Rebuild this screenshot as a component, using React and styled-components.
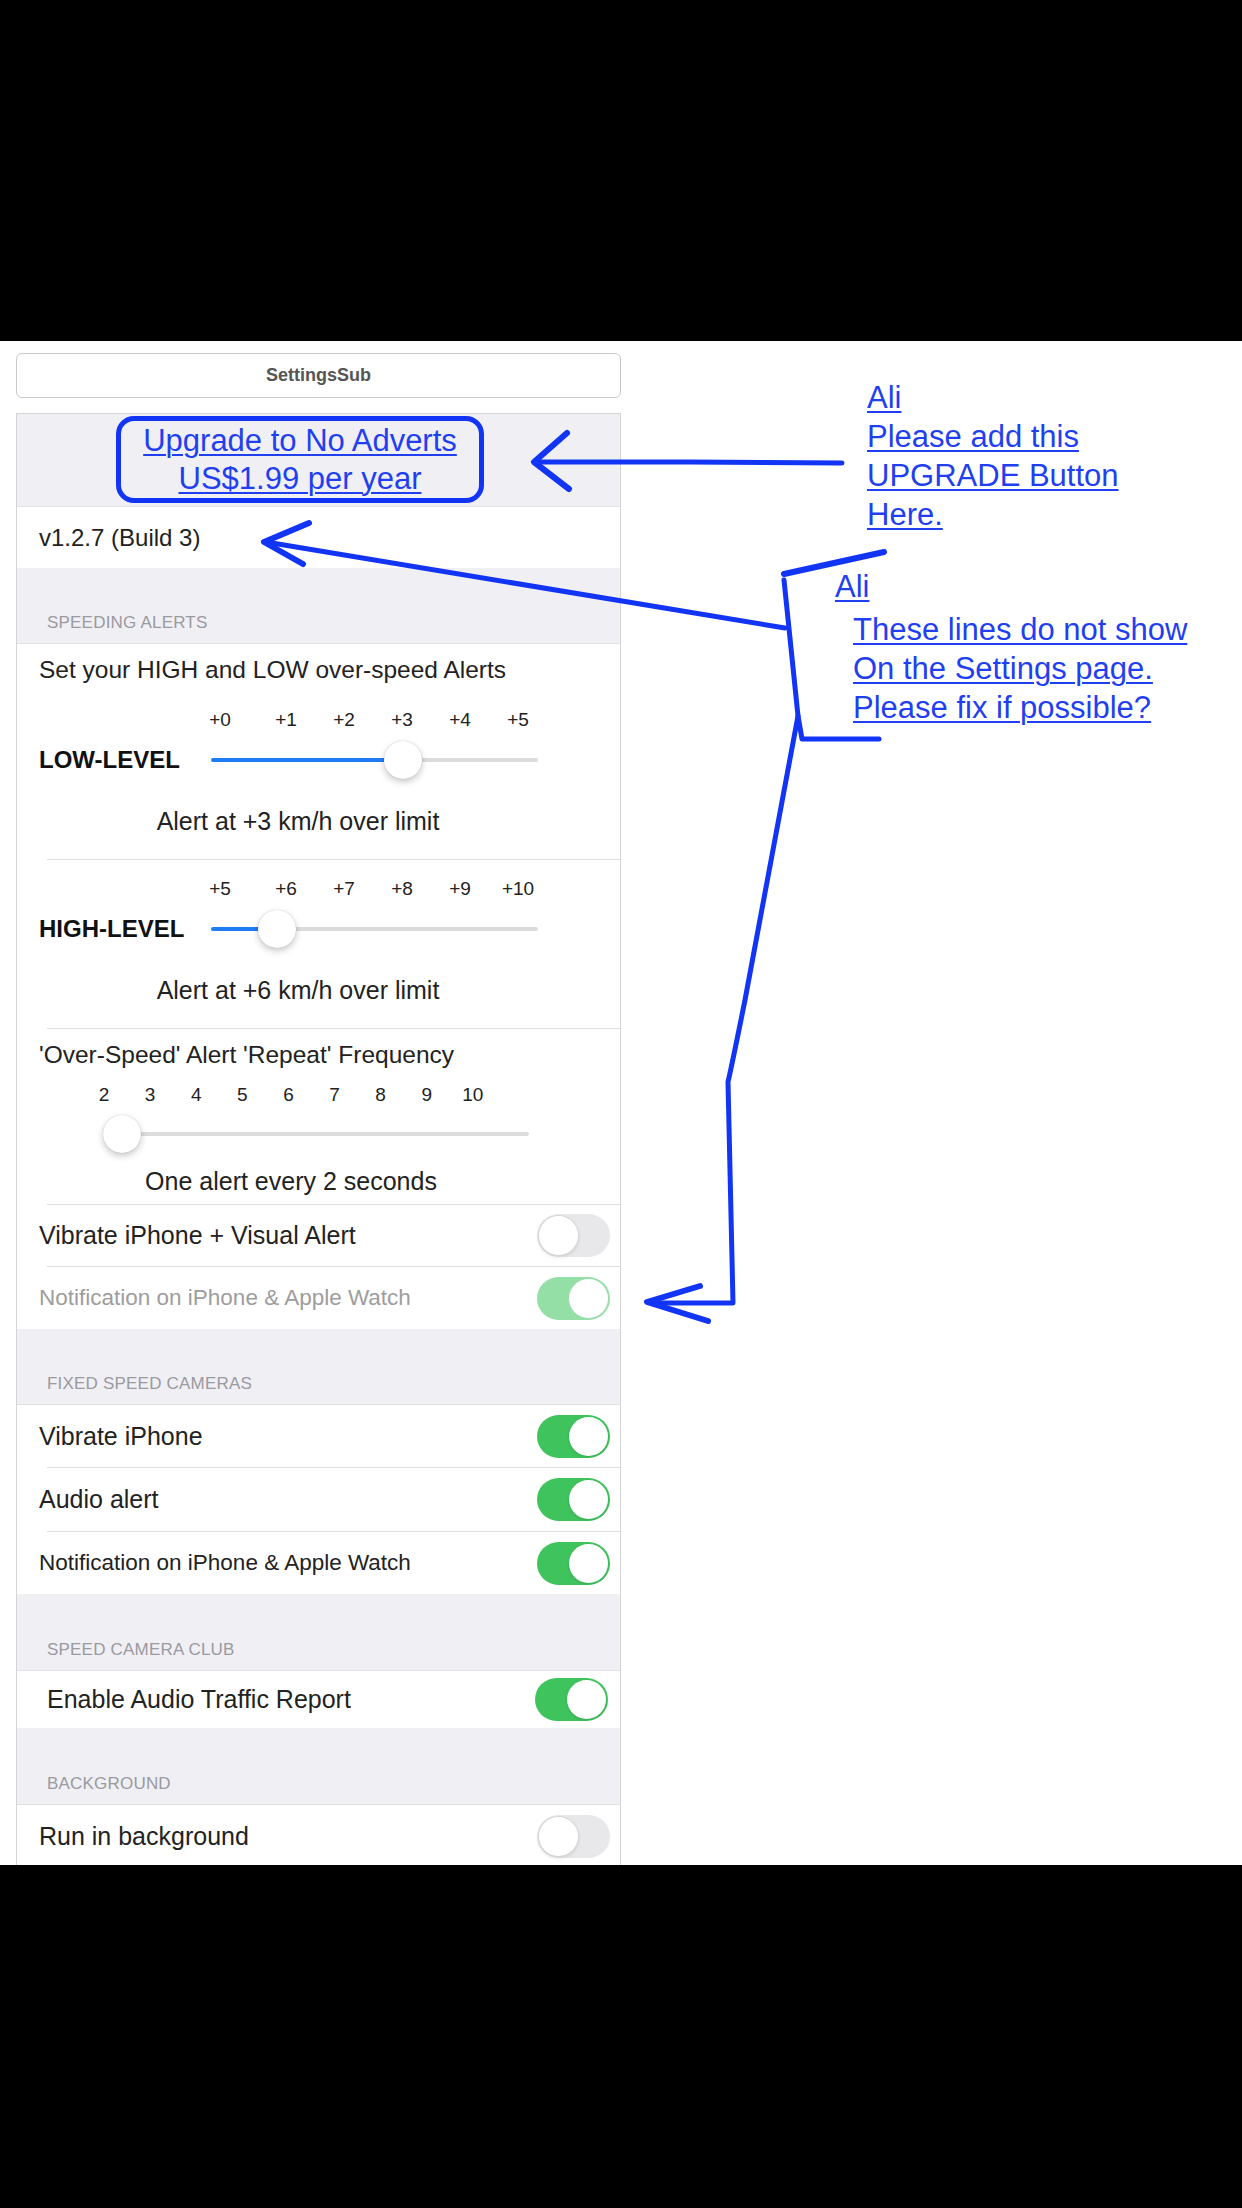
import React from "react";
import styled, { createGlobalStyle } from "styled-components";

const BLUE_INK = "#1234f4";
const BLUE_TEXT = "#1f3ff0";

const GlobalStyle = createGlobalStyle`
  html, body {
    margin: 0;
    padding: 0;
    background: #000;
  }
  body {
    font-family: "Liberation Sans", Arial, sans-serif;
    color: #222;
  }
`;

const Page = styled.div`
  position: relative;
  width: 1242px;
  height: 2208px;
  display: flex;
  flex-direction: column;
  background: #000;
  overflow: hidden;
`;

const Band = styled.div`
  height: ${(p) => p.$h}px;
  flex-shrink: 0;
  background: #000;
`;

const Sheet = styled.div`
  height: 1524px;
  flex-shrink: 0;
  background: #fff;
  display: flex;
  overflow: hidden;
`;

const LeftCol = styled.div`
  width: 605px;
  flex: none;
  margin-left: 16px;
  padding-top: 12px;
  display: flex;
  flex-direction: column;
`;

const TitleBar = styled.div`
  height: 45px;
  flex: none;
  box-sizing: border-box;
  border: 1px solid #c9c9c9;
  border-radius: 6px;
  display: flex;
  align-items: center;
  justify-content: center;
  font-size: 18px;
  font-weight: 700;
  color: #555;
`;

const Panel = styled.div`
  margin-top: 15px;
  flex: none;
  border: 1px solid #d4d4d4;
  border-bottom: none;
  background: #efeff4;
`;

const UpgradeSection = styled.div`
  height: 92px;
  padding-top: 2px;
  box-sizing: border-box;
`;

const UpgradeButton = styled.div`
  width: 368px;
  height: 87px;
  margin-left: 99px;
  box-sizing: border-box;
  border: 5px solid ${BLUE_INK};
  border-radius: 18px;
  display: flex;
  flex-direction: column;
  align-items: center;
  justify-content: center;
  font-size: 31px;
  line-height: 38px;
  color: ${BLUE_TEXT};
  text-decoration: underline;
  text-decoration-thickness: 2px;
  text-underline-offset: 3px;
`;

const Group = styled.div`
  background: #fff;
  border-top: 1px solid #e2e2e6;
`;

const VersionRow = styled.div`
  height: 61px;
  display: flex;
  align-items: center;
  padding-left: 22px;
  font-size: 24px;
  color: #222;
`;

const SectionHeader = styled.div`
  height: ${(p) => p.$h || 75}px;
  box-sizing: border-box;
  display: flex;
  align-items: flex-end;
  padding: 0 0 10px 30px;
  font-size: 17px;
  line-height: 20px;
  color: #9a9a9f;
  letter-spacing: 0.2px;
`;

const Caption = styled.div`
  padding: 11px 22px 6px;
  font-size: 24.5px;
  line-height: 30px;
  color: #222;
`;

const Divider = styled.div`
  height: 1px;
  margin-left: 30px;
  background: #dedede;
`;

const LevelBlock = styled.div`
  padding-top: 14px;
`;

const TickRow = styled.div`
  height: 30px;
  display: flex;
  align-items: center;
  padding-left: ${(p) => p.$pad}px;
  margin-top: ${(p) => p.$top || 0}px;
  font-size: 19px;
  color: #222;
`;

const Tick = styled.span`
  width: ${(p) => p.$w}px;
  flex: none;
  box-sizing: border-box;
  padding-right: ${(p) => p.$trim || 0}px;
  text-align: center;
`;

const SliderRow = styled.div`
  height: ${(p) => p.$h}px;
  display: flex;
  align-items: center;
  padding-left: ${(p) => p.$pad}px;
`;

const LevelLabel = styled.div`
  width: 172px;
  flex: none;
  font-size: 24px;
  font-weight: 700;
  color: #111;
`;

const Track = styled.div`
  position: relative;
  width: ${(p) => p.$w}px;
  height: 4px;
  border-radius: 2px;
  background: #dcdcdc;
`;

const TrackFill = styled.div`
  height: 4px;
  border-radius: 2px;
  background: #1e7cf7;
`;

const Thumb = styled.div`
  position: absolute;
  top: 50%;
  width: 38px;
  height: 38px;
  margin: -19px 0 0 -19px;
  border-radius: 50%;
  background: #fff;
  box-shadow: 0 3px 7px rgba(0, 0, 0, 0.22), 0 0 1px rgba(0, 0, 0, 0.25);
`;

const ResultRow = styled.div`
  height: ${(p) => p.$h}px;
  display: flex;
  align-items: center;
  justify-content: center;
  padding-right: ${(p) => p.$shift}px;
  font-size: 25px;
  color: #222;
`;

const ToggleRow = styled.div`
  height: ${(p) => p.$h || 61}px;
  display: flex;
  align-items: center;
  justify-content: space-between;
  padding: 0 ${(p) => p.$right || 10}px 0 ${(p) => p.$left || 22}px;
  font-size: ${(p) => (p.$small ? 22.5 : 25)}px;
  color: ${(p) => (p.$dim ? "#9d9d9d" : "#222")};
`;

const ToggleTrack = styled.div`
  width: 73px;
  height: 43px;
  flex: none;
  box-sizing: border-box;
  padding: 2px;
  border-radius: 22px;
  display: flex;
  align-items: center;
  justify-content: ${(p) => (p.$on ? "flex-end" : "flex-start")};
  background: ${(p) => (p.$on ? (p.$dim ? "#93dfa6" : "#3fc45d") : "#e8e8ea")};
`;

const Knob = styled.div`
  width: 39px;
  height: 39px;
  border-radius: 50%;
  background: #fff;
  box-shadow: ${(p) =>
    p.$on
      ? p.$dim
        ? "0 0 0 1px #9fdcae"
        : "0 1px 3px rgba(0,0,0,0.15)"
      : "0 0 0 1px #d6d6d6, 0 2px 4px rgba(0,0,0,0.12)"};
`;

const AnnoCol = styled.div`
  margin-left: 214px;
  padding-top: 37px;
  display: flex;
  flex-direction: column;
`;

const Note = styled.div`
  margin-top: ${(p) => p.$top || 0}px;
  margin-left: ${(p) => p.$indent || 0}px;
  display: flex;
  flex-direction: column;
`;

const NoteLine = styled.span`
  font-size: 31px;
  line-height: 39px;
  color: ${BLUE_TEXT};
  text-decoration: underline;
  text-decoration-thickness: 2px;
  text-underline-offset: 3px;
  white-space: nowrap;
  margin-left: ${(p) => p.$indent || 0}px;
  margin-bottom: ${(p) => p.$gap || 0}px;
`;

const Ink = styled.svg`
  position: absolute;
  top: 0;
  left: 0;
  width: 1242px;
  height: 2208px;
  pointer-events: none;
`;

const Toggle = ({ on, dim }) => (
  <ToggleTrack $on={on} $dim={dim}>
    <Knob $on={on} $dim={dim} />
  </ToggleTrack>
);

const Slider = ({ width, pos, fill }) => (
  <Track $w={width}>
    {fill && <TrackFill style={{ width: pos }} />}
    <Thumb style={{ left: pos }} />
  </Track>
);

const LevelSlider = ({ label, ticks, pos, result }) => (
  <LevelBlock>
    <TickRow $pad={174}>
      {ticks.map((t, i) =>
        i === 0 ? (
          <Tick key={t} $w={66} $trim={8}>
            {t}
          </Tick>
        ) : (
          <Tick key={t} $w={58}>
            {t}
          </Tick>
        )
      )}
    </TickRow>
    <SliderRow $h={50} $pad={22}>
      <LevelLabel>{label}</LevelLabel>
      <Slider width={327} pos={pos} fill />
    </SliderRow>
    <ResultRow $h={72} $shift={41} style={{ marginBottom: 2 }}>
      {result}
    </ResultRow>
  </LevelBlock>
);

export default function App() {
  return (
    <>
      <GlobalStyle />
      <Page>
        <Band $h={341} />
        <Sheet>
          <LeftCol>
            <TitleBar>SettingsSub</TitleBar>
            <Panel>
              <UpgradeSection>
                <UpgradeButton>
                  <span>Upgrade to No Adverts</span>
                  <span>US$1.99 per year</span>
                </UpgradeButton>
              </UpgradeSection>
              <Group>
                <VersionRow>v1.2.7 (Build 3)</VersionRow>
              </Group>

              <SectionHeader>SPEEDING ALERTS</SectionHeader>
              <Group>
                <Caption>Set your HIGH and LOW over-speed Alerts</Caption>
                <LevelSlider
                  label="LOW-LEVEL"
                  ticks={["+0", "+1", "+2", "+3", "+4", "+5"]}
                  pos={192}
                  result="Alert at +3 km/h over limit"
                />
                <Divider />
                <LevelSlider
                  label="HIGH-LEVEL"
                  ticks={["+5", "+6", "+7", "+8", "+9", "+10"]}
                  pos={66}
                  result="Alert at +6 km/h over limit"
                />
                <Divider />
                <Caption>'Over-Speed' Alert 'Repeat' Frequency</Caption>
                <TickRow $pad={64} $top={4}>
                  {["2", "3", "4", "5", "6", "7", "8", "9", "10"].map((n) => (
                    <Tick key={n} $w={46.1}>
                      {n}
                    </Tick>
                  ))}
                </TickRow>
                <SliderRow $h={48} $pad={86}>
                  <Slider width={426} pos={19} />
                </SliderRow>
                <ResultRow $h={46} $shift={55}>
                  One alert every 2 seconds
                </ResultRow>
                <Divider />
                <ToggleRow>
                  Vibrate iPhone + Visual Alert
                  <Toggle on={false} />
                </ToggleRow>
                <Divider />
                <ToggleRow $small $dim $h={62}>
                  Notification on iPhone &amp; Apple Watch
                  <Toggle on dim />
                </ToggleRow>
              </Group>

              <SectionHeader>FIXED SPEED CAMERAS</SectionHeader>
              <Group>
                <ToggleRow $h={62}>
                  Vibrate iPhone
                  <Toggle on />
                </ToggleRow>
                <Divider />
                <ToggleRow $h={63}>
                  Audio alert
                  <Toggle on />
                </ToggleRow>
                <Divider />
                <ToggleRow $h={62} $small>
                  Notification on iPhone &amp; Apple Watch
                  <Toggle on />
                </ToggleRow>
              </Group>

              <SectionHeader $h={76}>SPEED CAMERA CLUB</SectionHeader>
              <Group>
                <ToggleRow $h={57} $left={30} $right={12}>
                  Enable Audio Traffic Report
                  <Toggle on />
                </ToggleRow>
              </Group>

              <SectionHeader $h={76}>BACKGROUND</SectionHeader>
              <Group>
                <ToggleRow $h={62}>
                  Run in background
                  <Toggle on={false} />
                </ToggleRow>
              </Group>
            </Panel>
          </LeftCol>

          <AnnoCol>
            <Note $indent={32}>
              <NoteLine>Ali</NoteLine>
              <NoteLine>Please add this</NoteLine>
              <NoteLine>UPGRADE Button</NoteLine>
              <NoteLine>Here.</NoteLine>
            </Note>
            <Note $top={33}>
              <NoteLine $gap={4}>Ali</NoteLine>
              <NoteLine $indent={18}>These lines do not show</NoteLine>
              <NoteLine $indent={18}>On the Settings page.</NoteLine>
              <NoteLine $indent={18}>Please fix if possible?</NoteLine>
            </Note>
          </AnnoCol>
        </Sheet>
        <Band $h={343} />

        <Ink viewBox="0 0 1242 2208">
          <g
            fill="none"
            stroke={BLUE_INK}
            strokeWidth="5"
            strokeLinecap="round"
            strokeLinejoin="round"
          >
            {/* upgrade arrow */}
            <path d="M842 463 L690 462 L536 462" />
            <path d="M567 433 L534 462 L569 489" strokeWidth="6" />
            {/* version arrow */}
            <path d="M785 628 L266 542" />
            <path d="M309 523 L264 542 L303 564" strokeWidth="6" />
            {/* bracket */}
            <path d="M884 552 L784 574" strokeWidth="6" />
            <path d="M784 580 L798 716 L802 739 L879 739" />
            {/* long line to notification toggle */}
            <path d="M798 716 L745 1000 Q733 1060 728 1082 L733 1303 L656 1303" />
            <path d="M700 1286 L647 1302 L708 1321" strokeWidth="6" />
          </g>
        </Ink>
      </Page>
    </>
  );
}
